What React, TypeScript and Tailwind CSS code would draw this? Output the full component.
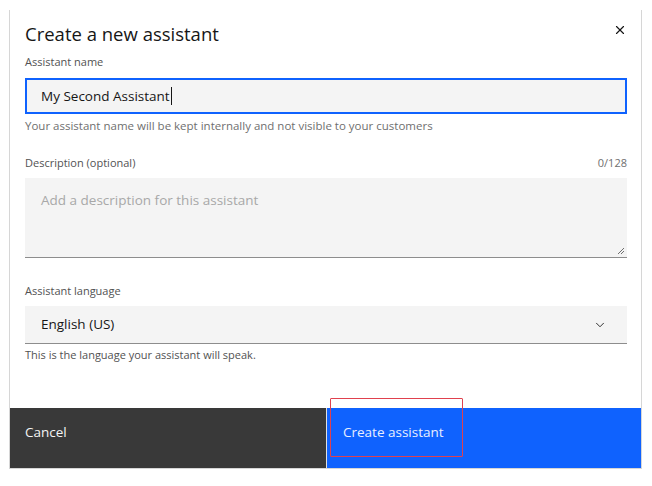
import { ChevronDown, X } from "lucide-react";

const font = { fontFamily: "'Open Sans', 'Noto Sans', sans-serif" };

export default function App() {
  return (
    <main className="relative h-[486px] w-[652px] bg-white text-[#161616]" style={font}>
      <div className="ml-[9px] w-[633px] pt-[10px]">
        {/* ── Modal ─────────────────────────────── */}
        <div className="flex flex-col border-x border-b border-[#d6d6d6]">
          <div className="flex items-start justify-between pl-[15px] pr-[14px] pt-[12px]">
            <h1 className="text-[18.5px] leading-[24px]">Create a new assistant</h1>
            <button className="mt-[1px] text-[#161616]">
              <X size={14} strokeWidth={2} />
            </button>
          </div>

          <div className="flex flex-col pl-[15px] pr-[14px]">
            <label className="mt-[9px] text-[11px] leading-[14px] text-[#525252]">Assistant name</label>
            <div className="mt-[9px] flex h-[36px] items-center border-2 border-[#0f62fe] bg-[#f4f4f4] px-[14px]">
              <span className="text-[13.5px]">My Second Assistant</span>
              <span className="ml-[1px] h-[18px] w-px bg-[#161616]" />
            </div>
            <p className="mt-[5px] text-[11.5px] leading-[14px] text-[#6f6f6f]">
              Your assistant name will be kept internally and not visible to your customers
            </p>

            <div className="mt-[23px] flex items-center justify-between text-[11px] leading-[14px] text-[#525252]">
              <label>Description (optional)</label>
              <span className="text-[#6f6f6f]">0/128</span>
            </div>
            <div className="relative mt-[8px] h-[80px] border-b border-[#8d8d8d] bg-[#f4f4f4] px-[16px] pt-[9px]">
              <span className="text-[13.5px] text-[#a8a8a8]">Add a description for this assistant</span>
              <svg className="absolute bottom-[2px] right-[2px]" width="8" height="8" viewBox="0 0 8 8">
                <path d="M7 1L1 7M7 4L4 7" stroke="#6f6f6f" strokeWidth="1" />
              </svg>
            </div>

            <label className="mt-[26px] text-[11px] leading-[14px] text-[#525252]">Assistant language</label>
            <div className="mt-[8px] flex h-[38px] items-center justify-between border-b border-[#8d8d8d] bg-[#f4f4f4] pl-[16px] pr-[20px]">
              <span className="text-[13.5px]">English (US)</span>
              <ChevronDown size={14} strokeWidth={1.5} className="text-[#161616]" />
            </div>
            <p className="mt-[4px] text-[11px] leading-[14px] text-[#525252]">
              This is the language your assistant will speak.
            </p>
          </div>

          {/* ── Footer ─────────────────────────────── */}
          <div className="mt-[46px] flex h-[60px]">
            <div className="flex h-full w-[316px] items-start bg-[#393939] pl-[15px] pt-[14px] text-[13.5px] leading-[20px] text-[#f4f4f4]">
              Cancel
            </div>
            <div className="w-px bg-[#e0e0e0]" />
            <div className="flex h-full flex-1 items-start bg-[#0f62fe] pl-[16px] pt-[14px] text-[13.5px] leading-[20px] text-[#e8eeff]">
              Create assistant
            </div>
          </div>
        </div>
      </div>

      {/* highlight box over the primary button */}
      <div className="absolute left-[330px] top-[398px] h-[59px] w-[133px] rounded-[1px] border-[1.5px] border-[#e0414e]" />
    </main>
  );
}
